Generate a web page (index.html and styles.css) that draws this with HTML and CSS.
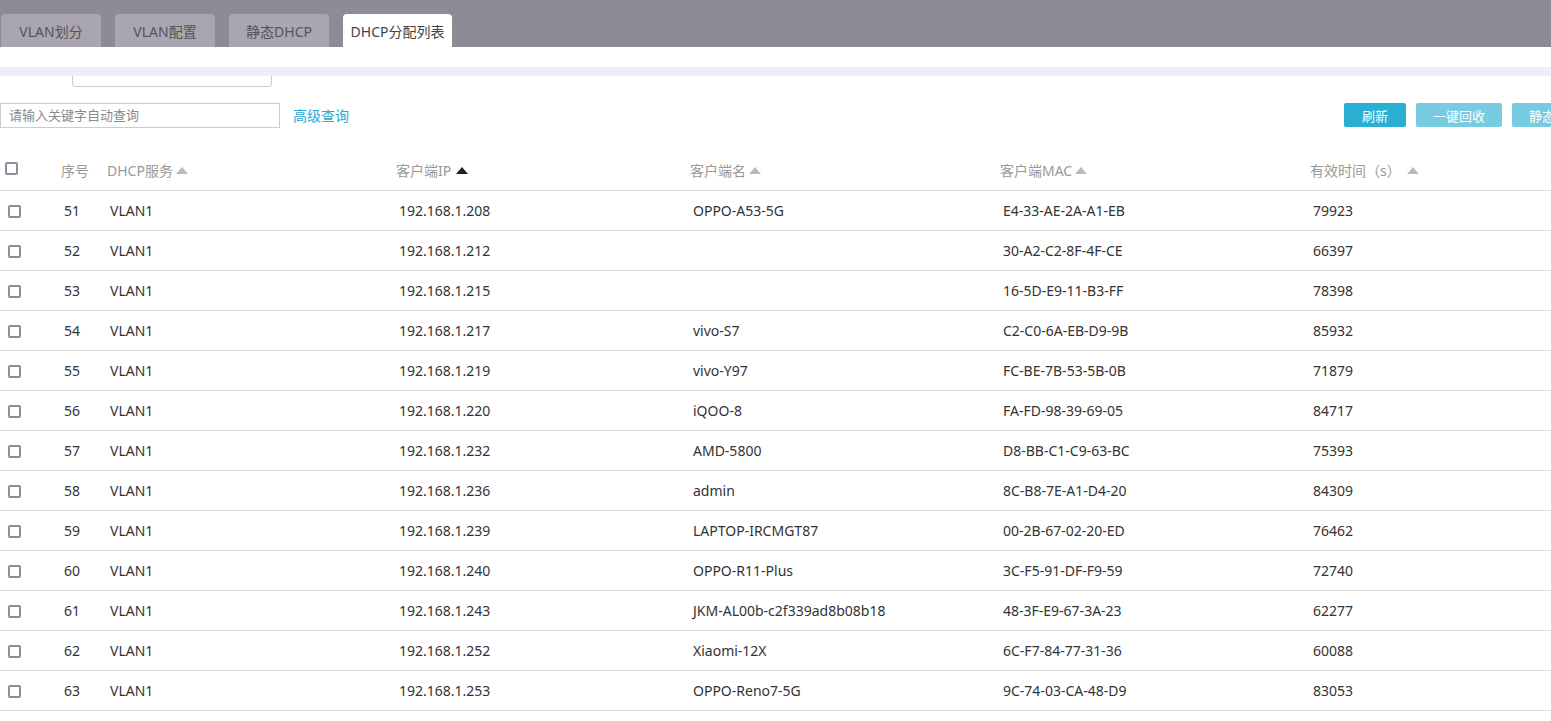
FILE: index.html
```html
<!DOCTYPE html>
<html>
<head>
<meta charset="utf-8">
<link rel="stylesheet" href="styles.css">
</head>
<body>
<div class="page">
  <div class="tabbar">
    <div class="tab">VLAN划分</div>
    <div class="tab">VLAN配置</div>
    <div class="tab">静态DHCP</div>
    <div class="tab active">DHCP分配列表</div>
  </div>
  <div class="spacer"></div>
  <div class="band"></div>
  <div class="stub-row"><div class="stub"></div></div>
  <div class="toolbar">
    <div class="search"><input class="search-input" type="text" placeholder="请输入关键字自动查询"><a class="adv">高级查询</a></div>
    <div class="btns">
      <button class="btn primary">刷新</button>
      <button class="btn light">一键回收</button>
      <button class="btn light wide">静态分配</button>
    </div>
  </div>
  <div class="table">
    <div class="row head">
      <div class="c c0"><span class="cb"></span></div>
      <div class="c">序号</div>
      <div class="c">DHCP服务<span class="tri"></span></div>
      <div class="c">客户端IP<span class="tri on"></span></div>
      <div class="c">客户端名<span class="tri"></span></div>
      <div class="c">客户端MAC<span class="tri"></span></div>
      <div class="c">有效时间（s）<span class="tri sp"></span></div>
    </div>
    <div id="rows"></div>
  </div>
</div>
<script src="app.js"></script>
</body>
</html>
```
FILE: app.js
```js
const data = [
  ["51","VLAN1","192.168.1.208","OPPO-A53-5G","E4-33-AE-2A-A1-EB","79923"],
  ["52","VLAN1","192.168.1.212","","30-A2-C2-8F-4F-CE","66397"],
  ["53","VLAN1","192.168.1.215","","16-5D-E9-11-B3-FF","78398"],
  ["54","VLAN1","192.168.1.217","vivo-S7","C2-C0-6A-EB-D9-9B","85932"],
  ["55","VLAN1","192.168.1.219","vivo-Y97","FC-BE-7B-53-5B-0B","71879"],
  ["56","VLAN1","192.168.1.220","iQOO-8","FA-FD-98-39-69-05","84717"],
  ["57","VLAN1","192.168.1.232","AMD-5800","D8-BB-C1-C9-63-BC","75393"],
  ["58","VLAN1","192.168.1.236","admin","8C-B8-7E-A1-D4-20","84309"],
  ["59","VLAN1","192.168.1.239","LAPTOP-IRCMGT87","00-2B-67-02-20-ED","76462"],
  ["60","VLAN1","192.168.1.240","OPPO-R11-Plus","3C-F5-91-DF-F9-59","72740"],
  ["61","VLAN1","192.168.1.243","JKM-AL00b-c2f339ad8b08b18","48-3F-E9-67-3A-23","62277"],
  ["62","VLAN1","192.168.1.252","Xiaomi-12X","6C-F7-84-77-31-36","60088"],
  ["63","VLAN1","192.168.1.253","OPPO-Reno7-5G","9C-74-03-CA-48-D9","83053"]
];
const host = document.getElementById("rows");
for (const r of data) {
  const row = document.createElement("div");
  row.className = "row";
  const c0 = document.createElement("div");
  c0.className = "c c0";
  c0.innerHTML = '<span class="cb"></span>';
  row.appendChild(c0);
  for (const v of r) {
    const c = document.createElement("div");
    c.className = "c";
    c.textContent = v;
    row.appendChild(c);
  }
  host.appendChild(row);
}
```
FILE: styles.css
```css
html, body { margin: 0; padding: 0; }
body {
  font-family: "Noto Sans", "Noto Sans CJK SC", sans-serif;
  font-size: 14px;
  color: #333;
  background: #fff;
  overflow: hidden;
}
.page { width: 1551px; height: 721px; overflow: hidden; }
.tabbar {
  height: 47px;
  background: #8e8b96;
  display: flex;
  align-items: flex-end;
  gap: 14px;
  padding-left: 1px;
  box-sizing: border-box;
}
.tab {
  width: 100px;
  height: 33px;
  background: #a9a6b1;
  color: #555;
  border-radius: 4px 4px 0 0;
  display: flex;
  align-items: center;
  justify-content: center;
  font-size: 14px;
}
.tab.active { background: #fff; width: 109px; color: #444; }
.spacer { height: 20px; }
.band { height: 9px; background: #eeeef7; }
.stub-row { height: 11px; padding-left: 72px; }
.stub {
  width: 198px;
  height: 10px;
  border: 1px solid #ccc;
  border-top: none;
  border-radius: 0 0 4px 4px;
}
.toolbar {
  margin-top: 16px;
  height: 24px;
  display: flex;
  justify-content: space-between;
  align-items: center;
}
.search { display: flex; align-items: center; gap: 13px; }
.search-input {
  width: 280px;
  height: 25px;
  box-sizing: border-box;
  border: 1px solid #ccc;
  padding: 0 8px;
  font-family: inherit;
  font-size: 13px;
  margin: 0;
  outline: none;
}
.search-input::placeholder { color: #8a8a8a; }
.adv { color: #2aa8d2; font-size: 14px; }
.btns { display: flex; gap: 10px; margin-right: -47px; }
.btn {
  height: 24px;
  border: none;
  border-radius: 2px;
  color: #fff;
  font-family: inherit;
  font-size: 13px;
  padding: 0;
  width: 62px;
}
.btn.primary { background: #29afd2; }
.btn.light { background: #77cce1; width: 86px; }
.btn.wide { width: 86px; }
.table { margin-top: 23px; }
.row {
  display: grid;
  grid-template-columns: 58px 46px 289px 294px 310px 310px 244px;
  height: 39px;
  border-bottom: 1px solid #dcdcdc;
  align-items: center;
}
.row .c { padding-left: 6px; white-space: nowrap; }
.row.head { height: 40px; color: #999; }
.row.head .c { padding-left: 3px; }
.cb {
  display: inline-block;
  width: 9px;
  height: 9px;
  border: 2px solid #8e8c9a;
  border-radius: 2px;
  vertical-align: middle;
  position: relative;
  top: -1px;
  margin-left: 2px;
}
.head .cb { top: -3px; }
.tri {
  display: inline-block;
  width: 0; height: 0;
  border-left: 6px solid transparent;
  border-right: 6px solid transparent;
  border-bottom: 7px solid #bbb;
  margin-left: 3px;
  vertical-align: middle;
  position: relative;
  top: -2px;
}
.tri.on { border-bottom-color: #222; margin-left: 5px; }
.tri.sp { margin-left: 6px; }
```
